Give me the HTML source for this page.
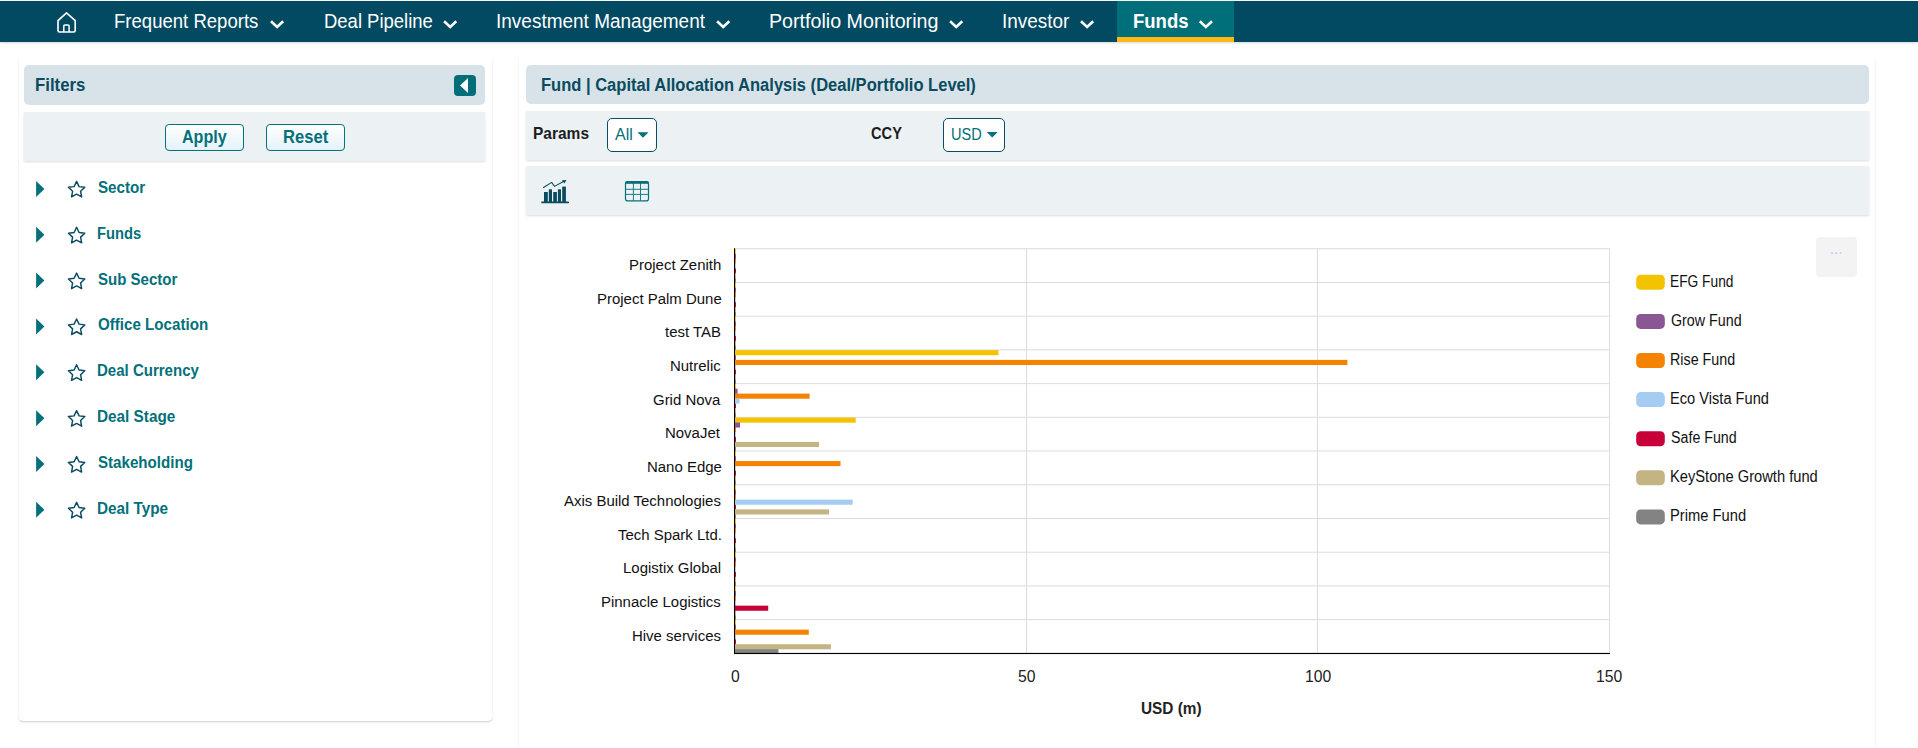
<!DOCTYPE html>
<html><head><meta charset="utf-8">
<style>
html,body{margin:0;padding:0;}
body{width:1918px;height:748px;overflow:hidden;position:relative;background:#ffffff;font-family:"Liberation Sans",sans-serif;}
.a{position:absolute;box-sizing:border-box;}
.t{position:absolute;white-space:nowrap;transform-origin:0 0;}
svg{position:absolute;left:0;top:0;overflow:visible;}
</style></head>
<body>
<!-- navbar -->
<div class="a" style="left:0;top:1px;width:1918px;height:41px;background:#014a62;box-shadow:0 1px 2px rgba(0,0,0,0.16);"></div>
<div class="a" style="left:1117px;top:1px;width:117px;height:41px;background:#016f79;"></div>
<div class="a" style="left:1117px;top:37px;width:117px;height:5px;background:#fcb813;"></div>

<!-- left card -->
<div class="a" style="left:18px;top:58.5px;width:474.5px;height:662px;background:#fff;border-left:1px solid #f5f5f5;border-right:1px solid #f5f5f5;border-radius:0 0 5px 5px;box-shadow:0 2px 2px -1px rgba(0,0,0,0.2);"></div>
<div class="a" style="left:24px;top:65px;width:461px;height:40px;background:#d8e3e9;border-radius:5px;"></div>
<div class="a" style="left:454px;top:75px;width:22px;height:21px;background:#036d78;border-radius:4px;"></div>
<div class="a" style="left:24px;top:112px;width:461px;height:49px;background:#ecf1f4;box-shadow:0 1px 2px rgba(0,0,0,0.14);"></div>
<div class="a" style="left:165px;top:124px;width:79px;height:27px;border:1.5px solid #04717b;border-radius:4px;background:linear-gradient(#ffffff,#e4f1f9);"></div>
<div class="a" style="left:266px;top:124px;width:79px;height:27px;border:1.5px solid #04717b;border-radius:4px;background:linear-gradient(#ffffff,#e4f1f9);"></div>

<!-- right card -->
<div class="a" style="left:518px;top:59px;width:1358px;height:700px;background:#fff;border-left:1px solid #f5f5f5;border-right:1px solid #f5f5f5;"></div>
<div class="a" style="left:526px;top:65px;width:1343px;height:39px;background:#d8e3e9;border-radius:5px;"></div>
<div class="a" style="left:526px;top:111px;width:1343px;height:49px;background:#ecf1f4;box-shadow:0 1px 2px rgba(0,0,0,0.14);"></div>
<div class="a" style="left:526px;top:166px;width:1343px;height:49px;background:#ecf1f4;box-shadow:0 1px 2px rgba(0,0,0,0.14);"></div>
<div class="a" style="left:607px;top:118px;width:50px;height:34px;border:1.5px solid #0b4e63;border-radius:5px;background:#fff;"></div>
<div class="a" style="left:943px;top:118px;width:62px;height:34px;border:1.5px solid #0b4e63;border-radius:5px;background:#fff;"></div>
<div class="a" style="left:1816px;top:237px;width:41px;height:40px;background:#f3f3f3;border-radius:4px;"></div>

<svg width="1918" height="748" viewBox="0 0 1918 748">
<!-- home icon -->
<path d="M58 20.6 L66.5 12.8 L75.2 20.6 V30.4 Q75.2 32 73.6 32 H59.6 Q58 32 58 30.4 Z" fill="none" stroke="#fff" stroke-width="1.65" stroke-linejoin="round"/>
<path d="M63.8 32 V26.1 Q63.8 24.9 65 24.9 H67.9 Q69.1 24.9 69.1 26.1 V32" fill="none" stroke="#fff" stroke-width="1.5"/>
<!-- nav chevrons -->
<g fill="none" stroke="#fff" stroke-width="2.6" stroke-linecap="butt" stroke-linejoin="miter" transform="translate(0,-0.6)">
<path d="M271 21.8 L277.1 27.6 L283.2 21.8"/>
<path d="M444.1 21.8 L450.2 27.6 L456.3 21.8"/>
<path d="M717.1 21.8 L723.2 27.6 L729.3 21.8"/>
<path d="M950.1 21.8 L956.2 27.6 L962.3 21.8"/>
<path d="M1081 21.8 L1087.1 27.6 L1093.2 21.8"/>
<path d="M1199.8 21.8 L1205.9 27.6 L1212 21.8"/>
</g>
<!-- collapse triangle -->
<path d="M460 85.5 L468 78 V93 Z" fill="#fff"/>
<!-- dropdown carets -->
<path d="M637.5 132.3 L648.5 132.3 L643 137.8 Z" fill="#04717b"/>
<path d="M986.7 132.1 L997.7 132.1 L992.2 137.6 Z" fill="#04717b"/>
<!-- chart icon -->
<g fill="#0a4b60">
<rect x="541.2" y="201.6" width="27.8" height="1.6" rx="0.6"/>
<rect x="544" y="192" width="3.8" height="10"/>
<rect x="548.8" y="189.3" width="3.2" height="12.7"/>
<rect x="553.2" y="192" width="3.7" height="10"/>
<rect x="557.9" y="189.3" width="3.1" height="12.7"/>
<rect x="562.2" y="186.6" width="3.7" height="15.4"/>
<path d="M562 180.3 L566.5 180 L564.3 183.6 Z"/>
</g>
<path d="M543.1 187.8 L551.7 182.4 L554.4 186.4 L564 181.3" fill="none" stroke="#0a4b60" stroke-width="1.1"/>
<!-- table icon -->
<g fill="none" stroke="#04717b">
<rect x="625.5" y="181.5" width="23" height="19.4" rx="2.2" stroke-width="1.2"/>
<path d="M625.5 182.6 H648.5" stroke-width="2.4"/>
<path d="M626 189.3 H648 M626 194.4 H648 M633.4 182 V200.5 M640.5 182 V200.5" stroke-width="0.9"/>
</g>
<!-- export dots -->
<g fill="#a9c9f5">
<rect x="1831.3" y="252.3" width="1.6" height="1.6"/>
<rect x="1835.5" y="252.3" width="1.6" height="1.6"/>
<rect x="1839.7" y="252.3" width="1.6" height="1.6"/>
</g>
<path d="M36.1 180.90 L44.4 188.90 L36.1 196.90 Z" fill="#03707a"/>
<polygon points="76.60,181.40 79.07,186.60 84.78,187.34 80.59,191.30 81.65,196.96 76.60,194.20 71.55,196.96 72.61,191.30 68.42,187.34 74.13,186.60" fill="none" stroke="#0a4b60" stroke-width="1.45" stroke-linejoin="round"/>
<path d="M36.1 226.75 L44.4 234.75 L36.1 242.75 Z" fill="#03707a"/>
<polygon points="76.60,227.25 79.07,232.45 84.78,233.19 80.59,237.15 81.65,242.81 76.60,240.05 71.55,242.81 72.61,237.15 68.42,233.19 74.13,232.45" fill="none" stroke="#0a4b60" stroke-width="1.45" stroke-linejoin="round"/>
<path d="M36.1 272.60 L44.4 280.60 L36.1 288.60 Z" fill="#03707a"/>
<polygon points="76.60,273.10 79.07,278.30 84.78,279.04 80.59,283.00 81.65,288.66 76.60,285.90 71.55,288.66 72.61,283.00 68.42,279.04 74.13,278.30" fill="none" stroke="#0a4b60" stroke-width="1.45" stroke-linejoin="round"/>
<path d="M36.1 318.45 L44.4 326.45 L36.1 334.45 Z" fill="#03707a"/>
<polygon points="76.60,318.95 79.07,324.15 84.78,324.89 80.59,328.85 81.65,334.51 76.60,331.75 71.55,334.51 72.61,328.85 68.42,324.89 74.13,324.15" fill="none" stroke="#0a4b60" stroke-width="1.45" stroke-linejoin="round"/>
<path d="M36.1 364.30 L44.4 372.30 L36.1 380.30 Z" fill="#03707a"/>
<polygon points="76.60,364.80 79.07,370.00 84.78,370.74 80.59,374.70 81.65,380.36 76.60,377.60 71.55,380.36 72.61,374.70 68.42,370.74 74.13,370.00" fill="none" stroke="#0a4b60" stroke-width="1.45" stroke-linejoin="round"/>
<path d="M36.1 410.15 L44.4 418.15 L36.1 426.15 Z" fill="#03707a"/>
<polygon points="76.60,410.65 79.07,415.85 84.78,416.59 80.59,420.55 81.65,426.21 76.60,423.45 71.55,426.21 72.61,420.55 68.42,416.59 74.13,415.85" fill="none" stroke="#0a4b60" stroke-width="1.45" stroke-linejoin="round"/>
<path d="M36.1 456.00 L44.4 464.00 L36.1 472.00 Z" fill="#03707a"/>
<polygon points="76.60,456.50 79.07,461.70 84.78,462.44 80.59,466.40 81.65,472.06 76.60,469.30 71.55,472.06 72.61,466.40 68.42,462.44 74.13,461.70" fill="none" stroke="#0a4b60" stroke-width="1.45" stroke-linejoin="round"/>
<path d="M36.1 501.85 L44.4 509.85 L36.1 517.85 Z" fill="#03707a"/>
<polygon points="76.60,502.35 79.07,507.55 84.78,508.29 80.59,512.25 81.65,517.91 76.60,515.15 71.55,517.91 72.61,512.25 68.42,508.29 74.13,507.55" fill="none" stroke="#0a4b60" stroke-width="1.45" stroke-linejoin="round"/>
<rect x="735" y="248.25" width="874.5" height="1" fill="#dcdcdc"/>
<rect x="735" y="281.97" width="874.5" height="1" fill="#dcdcdc"/>
<rect x="735" y="315.68" width="874.5" height="1" fill="#dcdcdc"/>
<rect x="735" y="349.40" width="874.5" height="1" fill="#dcdcdc"/>
<rect x="735" y="383.12" width="874.5" height="1" fill="#dcdcdc"/>
<rect x="735" y="416.83" width="874.5" height="1" fill="#dcdcdc"/>
<rect x="735" y="450.55" width="874.5" height="1" fill="#dcdcdc"/>
<rect x="735" y="484.27" width="874.5" height="1" fill="#dcdcdc"/>
<rect x="735" y="517.98" width="874.5" height="1" fill="#dcdcdc"/>
<rect x="735" y="551.70" width="874.5" height="1" fill="#dcdcdc"/>
<rect x="735" y="585.42" width="874.5" height="1" fill="#dcdcdc"/>
<rect x="735" y="619.13" width="874.5" height="1" fill="#dcdcdc"/>
<rect x="1026" y="248.25" width="1" height="404.60" fill="#dddddd"/>
<rect x="1317" y="248.25" width="1" height="404.60" fill="#dddddd"/>
<rect x="1609" y="248.25" width="1" height="404.60" fill="#dddddd"/>
<rect x="735.00" y="249.00" width="1" height="5.10" fill="#f4c300"/>
<rect x="735.00" y="253.87" width="1" height="5.10" fill="#8a5794"/>
<rect x="735.00" y="258.74" width="1" height="5.10" fill="#f38300"/>
<rect x="735.00" y="263.61" width="1" height="5.10" fill="#a5cdf1"/>
<rect x="735.00" y="268.48" width="1" height="5.10" fill="#c8003a"/>
<rect x="735.00" y="273.35" width="1" height="5.10" fill="#c4b383"/>
<rect x="735.00" y="278.22" width="1" height="5.10" fill="#838383"/>
<rect x="735.00" y="282.72" width="1" height="5.10" fill="#f4c300"/>
<rect x="735.00" y="287.59" width="1" height="5.10" fill="#8a5794"/>
<rect x="735.00" y="292.46" width="1" height="5.10" fill="#f38300"/>
<rect x="735.00" y="297.33" width="1" height="5.10" fill="#a5cdf1"/>
<rect x="735.00" y="302.20" width="1" height="5.10" fill="#c8003a"/>
<rect x="735.00" y="307.07" width="1" height="5.10" fill="#c4b383"/>
<rect x="735.00" y="311.94" width="1" height="5.10" fill="#838383"/>
<rect x="735.00" y="316.43" width="1" height="5.10" fill="#f4c300"/>
<rect x="735.00" y="321.30" width="1" height="5.10" fill="#8a5794"/>
<rect x="735.00" y="326.17" width="1" height="5.10" fill="#f38300"/>
<rect x="735.00" y="331.04" width="1" height="5.10" fill="#a5cdf1"/>
<rect x="735.00" y="335.91" width="1" height="5.10" fill="#c8003a"/>
<rect x="735.00" y="340.78" width="1" height="5.10" fill="#c4b383"/>
<rect x="735.00" y="345.65" width="1" height="5.10" fill="#838383"/>
<rect x="735.00" y="350.15" width="1" height="5.10" fill="#f4c300"/>
<rect x="735.00" y="355.02" width="1" height="5.10" fill="#8a5794"/>
<rect x="735.00" y="359.89" width="1" height="5.10" fill="#f38300"/>
<rect x="735.00" y="364.76" width="1" height="5.10" fill="#a5cdf1"/>
<rect x="735.00" y="369.63" width="1" height="5.10" fill="#c8003a"/>
<rect x="735.00" y="374.50" width="1" height="5.10" fill="#c4b383"/>
<rect x="735.00" y="379.37" width="1" height="5.10" fill="#838383"/>
<rect x="735.00" y="383.87" width="1" height="5.10" fill="#f4c300"/>
<rect x="735.00" y="388.74" width="1" height="5.10" fill="#8a5794"/>
<rect x="735.00" y="393.61" width="1" height="5.10" fill="#f38300"/>
<rect x="735.00" y="398.48" width="1" height="5.10" fill="#a5cdf1"/>
<rect x="735.00" y="403.35" width="1" height="5.10" fill="#c8003a"/>
<rect x="735.00" y="408.22" width="1" height="5.10" fill="#c4b383"/>
<rect x="735.00" y="413.09" width="1" height="5.10" fill="#838383"/>
<rect x="735.00" y="417.58" width="1" height="5.10" fill="#f4c300"/>
<rect x="735.00" y="422.45" width="1" height="5.10" fill="#8a5794"/>
<rect x="735.00" y="427.32" width="1" height="5.10" fill="#f38300"/>
<rect x="735.00" y="432.19" width="1" height="5.10" fill="#a5cdf1"/>
<rect x="735.00" y="437.06" width="1" height="5.10" fill="#c8003a"/>
<rect x="735.00" y="441.93" width="1" height="5.10" fill="#c4b383"/>
<rect x="735.00" y="446.80" width="1" height="5.10" fill="#838383"/>
<rect x="735.00" y="451.30" width="1" height="5.10" fill="#f4c300"/>
<rect x="735.00" y="456.17" width="1" height="5.10" fill="#8a5794"/>
<rect x="735.00" y="461.04" width="1" height="5.10" fill="#f38300"/>
<rect x="735.00" y="465.91" width="1" height="5.10" fill="#a5cdf1"/>
<rect x="735.00" y="470.78" width="1" height="5.10" fill="#c8003a"/>
<rect x="735.00" y="475.65" width="1" height="5.10" fill="#c4b383"/>
<rect x="735.00" y="480.52" width="1" height="5.10" fill="#838383"/>
<rect x="735.00" y="485.02" width="1" height="5.10" fill="#f4c300"/>
<rect x="735.00" y="489.89" width="1" height="5.10" fill="#8a5794"/>
<rect x="735.00" y="494.76" width="1" height="5.10" fill="#f38300"/>
<rect x="735.00" y="499.63" width="1" height="5.10" fill="#a5cdf1"/>
<rect x="735.00" y="504.50" width="1" height="5.10" fill="#c8003a"/>
<rect x="735.00" y="509.37" width="1" height="5.10" fill="#c4b383"/>
<rect x="735.00" y="514.24" width="1" height="5.10" fill="#838383"/>
<rect x="735.00" y="518.73" width="1" height="5.10" fill="#f4c300"/>
<rect x="735.00" y="523.60" width="1" height="5.10" fill="#8a5794"/>
<rect x="735.00" y="528.47" width="1" height="5.10" fill="#f38300"/>
<rect x="735.00" y="533.34" width="1" height="5.10" fill="#a5cdf1"/>
<rect x="735.00" y="538.21" width="1" height="5.10" fill="#c8003a"/>
<rect x="735.00" y="543.08" width="1" height="5.10" fill="#c4b383"/>
<rect x="735.00" y="547.95" width="1" height="5.10" fill="#838383"/>
<rect x="735.00" y="552.45" width="1" height="5.10" fill="#f4c300"/>
<rect x="735.00" y="557.32" width="1" height="5.10" fill="#8a5794"/>
<rect x="735.00" y="562.19" width="1" height="5.10" fill="#f38300"/>
<rect x="735.00" y="567.06" width="1" height="5.10" fill="#a5cdf1"/>
<rect x="735.00" y="571.93" width="1" height="5.10" fill="#c8003a"/>
<rect x="735.00" y="576.80" width="1" height="5.10" fill="#c4b383"/>
<rect x="735.00" y="581.67" width="1" height="5.10" fill="#838383"/>
<rect x="735.00" y="586.17" width="1" height="5.10" fill="#f4c300"/>
<rect x="735.00" y="591.04" width="1" height="5.10" fill="#8a5794"/>
<rect x="735.00" y="595.91" width="1" height="5.10" fill="#f38300"/>
<rect x="735.00" y="600.78" width="1" height="5.10" fill="#a5cdf1"/>
<rect x="735.00" y="605.65" width="1" height="5.10" fill="#c8003a"/>
<rect x="735.00" y="610.52" width="1" height="5.10" fill="#c4b383"/>
<rect x="735.00" y="615.39" width="1" height="5.10" fill="#838383"/>
<rect x="735.00" y="619.88" width="1" height="5.10" fill="#f4c300"/>
<rect x="735.00" y="624.75" width="1" height="5.10" fill="#8a5794"/>
<rect x="735.00" y="629.62" width="1" height="5.10" fill="#f38300"/>
<rect x="735.00" y="634.49" width="1" height="5.10" fill="#a5cdf1"/>
<rect x="735.00" y="639.36" width="1" height="5.10" fill="#c8003a"/>
<rect x="735.00" y="644.23" width="1" height="5.10" fill="#c4b383"/>
<rect x="735.00" y="649.10" width="1" height="3.90" fill="#838383"/>
<rect x="735.00" y="350.15" width="263.40" height="5.10" fill="#f4c300"/>
<rect x="735.00" y="359.89" width="612.40" height="5.10" fill="#f38300"/>
<rect x="735.00" y="388.74" width="2.60" height="5.10" fill="#8a5794"/>
<rect x="735.00" y="393.61" width="74.60" height="5.10" fill="#f38300"/>
<rect x="735.00" y="398.48" width="4.60" height="5.10" fill="#a5cdf1"/>
<rect x="735.00" y="417.58" width="120.70" height="5.10" fill="#f4c300"/>
<rect x="735.00" y="422.45" width="5.00" height="5.10" fill="#8a5794"/>
<rect x="735.00" y="441.93" width="84.00" height="5.10" fill="#c4b383"/>
<rect x="735.00" y="461.04" width="105.50" height="5.10" fill="#f38300"/>
<rect x="735.00" y="499.63" width="117.70" height="5.10" fill="#a5cdf1"/>
<rect x="735.00" y="509.37" width="94.00" height="5.10" fill="#c4b383"/>
<rect x="735.00" y="605.65" width="33.20" height="5.10" fill="#c8003a"/>
<rect x="735.00" y="629.62" width="73.80" height="5.10" fill="#f38300"/>
<rect x="735.00" y="644.23" width="95.90" height="5.10" fill="#c4b383"/>
<rect x="735.00" y="649.10" width="43.40" height="3.90" fill="#838383"/>
<rect x="734" y="248.2" width="1" height="405.8" fill="#000"/>
<rect x="734" y="652.9" width="876" height="1.15" fill="#000"/>
<rect x="1636.2" y="274.80" width="28.6" height="15" rx="4.5" fill="#f4c300"/>
<rect x="1636.2" y="313.90" width="28.6" height="15" rx="4.5" fill="#8a5794"/>
<rect x="1636.2" y="353.00" width="28.6" height="15" rx="4.5" fill="#f38300"/>
<rect x="1636.2" y="392.10" width="28.6" height="15" rx="4.5" fill="#a5cdf1"/>
<rect x="1636.2" y="431.20" width="28.6" height="15" rx="4.5" fill="#c8003a"/>
<rect x="1636.2" y="470.30" width="28.6" height="15" rx="4.5" fill="#c4b383"/>
<rect x="1636.2" y="509.40" width="28.6" height="15" rx="4.5" fill="#838383"/>
</svg>
<div class="t" style="left:113.67px;top:11.07px;font-size:20px;line-height:20px;font-weight:400;color:#ffffff;transform:scaleX(0.9273)">Frequent Reports</div>
<div class="t" style="left:323.58px;top:11.07px;font-size:20px;line-height:20px;font-weight:400;color:#ffffff;transform:scaleX(0.9235)">Deal Pipeline</div>
<div class="t" style="left:496.05px;top:11.07px;font-size:20px;line-height:20px;font-weight:400;color:#ffffff;transform:scaleX(0.9496)">Investment Management</div>
<div class="t" style="left:769.22px;top:11.07px;font-size:20px;line-height:20px;font-weight:400;color:#ffffff;transform:scaleX(0.9831)">Portfolio Monitoring</div>
<div class="t" style="left:1001.65px;top:11.07px;font-size:20px;line-height:20px;font-weight:400;color:#ffffff;transform:scaleX(0.9463)">Investor</div>
<div class="t" style="left:1133.07px;top:11.07px;font-size:20px;line-height:20px;font-weight:700;color:#ffffff;transform:scaleX(0.9258)">Funds</div>
<div class="t" style="left:35.07px;top:75.76px;font-size:18px;line-height:18px;font-weight:700;color:#0a4b60;transform:scaleX(0.9320)">Filters</div>
<div class="t" style="left:182.30px;top:127.96px;font-size:18px;line-height:18px;font-weight:700;color:#03707a;transform:scaleX(0.8942)">Apply</div>
<div class="t" style="left:282.88px;top:127.96px;font-size:18px;line-height:18px;font-weight:700;color:#03707a;transform:scaleX(0.9223)">Reset</div>
<div class="t" style="left:97.80px;top:179.86px;font-size:16px;line-height:16px;font-weight:700;color:#03707a;transform:scaleX(0.9481)">Sector</div>
<div class="t" style="left:96.88px;top:225.71px;font-size:16px;line-height:16px;font-weight:700;color:#03707a;transform:scaleX(0.9194)">Funds</div>
<div class="t" style="left:97.80px;top:271.56px;font-size:16px;line-height:16px;font-weight:700;color:#03707a;transform:scaleX(0.9390)">Sub Sector</div>
<div class="t" style="left:97.80px;top:317.41px;font-size:16px;line-height:16px;font-weight:700;color:#03707a;transform:scaleX(0.9457)">Office Location</div>
<div class="t" style="left:96.86px;top:363.26px;font-size:16px;line-height:16px;font-weight:700;color:#03707a;transform:scaleX(0.9387)">Deal Currency</div>
<div class="t" style="left:96.84px;top:409.11px;font-size:16px;line-height:16px;font-weight:700;color:#03707a;transform:scaleX(0.9566)">Deal Stage</div>
<div class="t" style="left:97.80px;top:454.96px;font-size:16px;line-height:16px;font-weight:700;color:#03707a;transform:scaleX(0.9450)">Stakeholding</div>
<div class="t" style="left:96.84px;top:500.81px;font-size:16px;line-height:16px;font-weight:700;color:#03707a;transform:scaleX(0.9551)">Deal Type</div>
<div class="t" style="left:540.88px;top:75.76px;font-size:18px;line-height:18px;font-weight:700;color:#0a4b60;transform:scaleX(0.9179)">Fund | Capital Allocation Analysis (Deal/Portfolio Level)</div>
<div class="t" style="left:533.46px;top:125.03px;font-size:16.5px;line-height:16.5px;font-weight:700;color:#1c1c1c;transform:scaleX(0.9393)">Params</div>
<div class="t" style="left:615.30px;top:126.96px;font-size:16px;line-height:16px;font-weight:400;color:#03707a;transform:scaleX(0.9985)">All</div>
<div class="t" style="left:870.80px;top:125.03px;font-size:16.5px;line-height:16.5px;font-weight:700;color:#1c1c1c;transform:scaleX(0.8871)">CCY</div>
<div class="t" style="left:950.79px;top:127.16px;font-size:16px;line-height:16px;font-weight:400;color:#03707a;transform:scaleX(0.9092)">USD</div>
<div class="t" style="left:629.22px;top:256.79px;font-size:15.5px;line-height:15.5px;font-weight:400;color:#111111;transform:scaleX(0.9650)">Project Zenith</div>
<div class="t" style="left:596.80px;top:290.50px;font-size:15.5px;line-height:15.5px;font-weight:400;color:#111111;transform:scaleX(0.9650)">Project Palm Dune</div>
<div class="t" style="left:664.98px;top:324.22px;font-size:15.5px;line-height:15.5px;font-weight:400;color:#111111;transform:scaleX(0.9650)">test TAB</div>
<div class="t" style="left:669.96px;top:357.94px;font-size:15.5px;line-height:15.5px;font-weight:400;color:#111111;transform:scaleX(0.9650)">Nutrelic</div>
<div class="t" style="left:653.20px;top:391.65px;font-size:15.5px;line-height:15.5px;font-weight:400;color:#111111;transform:scaleX(0.9650)">Grid Nova</div>
<div class="t" style="left:665.36px;top:425.37px;font-size:15.5px;line-height:15.5px;font-weight:400;color:#111111;transform:scaleX(0.9650)">NovaJet</div>
<div class="t" style="left:646.65px;top:459.09px;font-size:15.5px;line-height:15.5px;font-weight:400;color:#111111;transform:scaleX(0.9650)">Nano Edge</div>
<div class="t" style="left:563.52px;top:492.80px;font-size:15.5px;line-height:15.5px;font-weight:400;color:#111111;transform:scaleX(0.9650)">Axis Build Technologies</div>
<div class="t" style="left:618.23px;top:526.52px;font-size:15.5px;line-height:15.5px;font-weight:400;color:#111111;transform:scaleX(0.9650)">Tech Spark Ltd.</div>
<div class="t" style="left:623.22px;top:560.24px;font-size:15.5px;line-height:15.5px;font-weight:400;color:#111111;transform:scaleX(0.9650)">Logistix Global</div>
<div class="t" style="left:600.93px;top:593.95px;font-size:15.5px;line-height:15.5px;font-weight:400;color:#111111;transform:scaleX(0.9650)">Pinnacle Logistics</div>
<div class="t" style="left:631.72px;top:627.67px;font-size:15.5px;line-height:15.5px;font-weight:400;color:#111111;transform:scaleX(0.9650)">Hive services</div>
<div class="t" style="left:730.79px;top:668.96px;font-size:16px;line-height:16px;font-weight:400;color:#222222;transform:scaleX(0.9800)">0</div>
<div class="t" style="left:1018.03px;top:668.96px;font-size:16px;line-height:16px;font-weight:400;color:#222222;transform:scaleX(0.9800)">50</div>
<div class="t" style="left:1304.68px;top:668.96px;font-size:16px;line-height:16px;font-weight:400;color:#222222;transform:scaleX(0.9800)">100</div>
<div class="t" style="left:1596.18px;top:668.96px;font-size:16px;line-height:16px;font-weight:400;color:#222222;transform:scaleX(0.9800)">150</div>
<div class="t" style="left:1141.30px;top:700.96px;font-size:16px;line-height:16px;font-weight:700;color:#222222;transform:scaleX(0.9605)">USD (m)</div>
<div class="t" style="left:1670.33px;top:273.63px;font-size:15.8px;line-height:15.8px;font-weight:400;color:#111111;transform:scaleX(0.8708)">EFG Fund</div>
<div class="t" style="left:1671.20px;top:312.73px;font-size:15.8px;line-height:15.8px;font-weight:400;color:#111111;transform:scaleX(0.9037)">Grow Fund</div>
<div class="t" style="left:1670.30px;top:351.83px;font-size:15.8px;line-height:15.8px;font-weight:400;color:#111111;transform:scaleX(0.9044)">Rise Fund</div>
<div class="t" style="left:1670.27px;top:390.93px;font-size:15.8px;line-height:15.8px;font-weight:400;color:#111111;transform:scaleX(0.9262)">Eco Vista Fund</div>
<div class="t" style="left:1671.20px;top:430.03px;font-size:15.8px;line-height:15.8px;font-weight:400;color:#111111;transform:scaleX(0.9015)">Safe Fund</div>
<div class="t" style="left:1670.27px;top:469.13px;font-size:15.8px;line-height:15.8px;font-weight:400;color:#111111;transform:scaleX(0.9297)">KeyStone Growth fund</div>
<div class="t" style="left:1670.27px;top:508.23px;font-size:15.8px;line-height:15.8px;font-weight:400;color:#111111;transform:scaleX(0.9316)">Prime Fund</div>
</body></html>
